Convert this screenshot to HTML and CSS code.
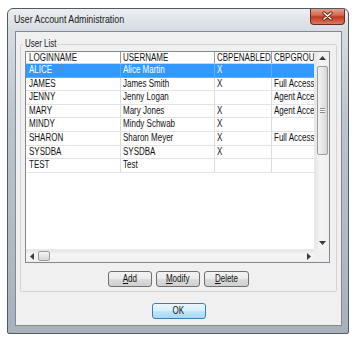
FILE: index.html
```html
<!DOCTYPE html>
<html>
<head>
<meta charset="utf-8">
<link rel="stylesheet" href="styles.css">
</head>
<body>
<div class="window">
  <div class="titlebar">
    <span class="title"><span class="t">User Account Administration</span></span>
    <div class="close">
      <svg width="11" height="10" viewBox="0 0 11 10">
        <path d="M2 2 L9 8 M9 2 L2 8" stroke="#5a1b12" stroke-width="3.2" stroke-linecap="round"/>
        <path d="M2 2 L9 8 M9 2 L2 8" stroke="#ffffff" stroke-width="1.6" stroke-linecap="round"/>
      </svg>
    </div>
  </div>
  <div class="frame-body">
    <div class="client">
      <fieldset class="group">
        <legend><span class="t">User List</span></legend>
        <div class="listview">
          <div class="lv-top">
            <div class="lv-table">
              <div class="hdr">
                <div class="c c1"><span class="t">LOGINNAME</span></div>
                <div class="c c2"><span class="t">USERNAME</span></div>
                <div class="c c3"><span class="t">CBPENABLED</span></div>
                <div class="c c4"><span class="t">CBPGROUP</span></div>
              </div>
              <div class="row sel">
                <div class="c c1"><span class="t">ALICE</span></div><div class="c c2"><span class="t">Alice Martin</span></div><div class="c c3"><span class="t">X</span></div><div class="c c4"></div>
              </div>
              <div class="row">
                <div class="c c1"><span class="t">JAMES</span></div><div class="c c2"><span class="t">James Smith</span></div><div class="c c3"><span class="t">X</span></div><div class="c c4"><span class="t">Full Access</span></div>
              </div>
              <div class="row">
                <div class="c c1"><span class="t">JENNY</span></div><div class="c c2"><span class="t">Jenny Logan</span></div><div class="c c3"></div><div class="c c4"><span class="t">Agent Access</span></div>
              </div>
              <div class="row">
                <div class="c c1"><span class="t">MARY</span></div><div class="c c2"><span class="t">Mary Jones</span></div><div class="c c3"><span class="t">X</span></div><div class="c c4"><span class="t">Agent Access</span></div>
              </div>
              <div class="row">
                <div class="c c1"><span class="t">MINDY</span></div><div class="c c2"><span class="t">Mindy Schwab</span></div><div class="c c3"><span class="t">X</span></div><div class="c c4"></div>
              </div>
              <div class="row">
                <div class="c c1"><span class="t">SHARON</span></div><div class="c c2"><span class="t">Sharon Meyer</span></div><div class="c c3"><span class="t">X</span></div><div class="c c4"><span class="t">Full Access</span></div>
              </div>
              <div class="row">
                <div class="c c1"><span class="t">SYSDBA</span></div><div class="c c2"><span class="t">SYSDBA</span></div><div class="c c3"><span class="t">X</span></div><div class="c c4"></div>
              </div>
              <div class="row">
                <div class="c c1"><span class="t">TEST</span></div><div class="c c2"><span class="t">Test</span></div><div class="c c3"></div><div class="c c4"></div>
              </div>
            </div>
            <div class="vscroll">
              <div class="sb-btn vb-up"><svg width="7" height="4" viewBox="0 0 7 4"><polygon points="3.5,0 7,4 0,4" fill="#3b3b3b"/></svg></div>
              <div class="v-track">
                <div class="v-thumb"><span class="grip"></span></div>
              </div>
              <div class="sb-btn vb-down"><svg width="7" height="4" viewBox="0 0 7 4"><polygon points="0,0 7,0 3.5,4" fill="#3b3b3b"/></svg></div>
            </div>
          </div>
          <div class="lv-bottom">
            <div class="hscroll">
              <div class="sb-btn hb-left"><svg width="4" height="7" viewBox="0 0 4 7"><polygon points="4,0 4,7 0,3.5" fill="#3b3b3b"/></svg></div>
              <div class="h-thumb"></div>
              <div class="h-track"></div>
              <div class="sb-btn hb-right"><svg width="4" height="7" viewBox="0 0 4 7"><polygon points="0,0 4,3.5 0,7" fill="#3b3b3b"/></svg></div>
            </div>
            <div class="corner"></div>
          </div>
        </div>
        <div class="buttons">
          <button class="btn b-add"><span class="t c-t"><u>A</u>dd</span></button>
          <button class="btn b-mod"><span class="t c-t"><u>M</u>odify</span></button>
          <button class="btn b-del"><span class="t c-t"><u>D</u>elete</span></button>
        </div>
      </fieldset>
      <div class="ok-row">
        <button class="btn ok"><span class="t c-t">OK</span></button>
      </div>
    </div>
  </div>
</div>
</body>
</html>
```
FILE: styles.css
```css
* { box-sizing: border-box; }
body {
  margin: 0;
  background: #ffffff;
  font-family: "Liberation Sans", Arial, sans-serif;
  font-size: 10px;
  color: #111;
}
.t {
  display: inline-block;
  white-space: nowrap;
  transform: scaleX(0.8);
  transform-origin: 0 50%;
}
.c-t {
  transform-origin: 50% 50%;
}
.window {
  margin: 8px 0 0 7px;
  width: 342px;
  height: 326px;
  border: 1px solid #515b66;
  border-radius: 6px 6px 2px 2px;
  background: linear-gradient(#eceff2, #d6dce2 22px, #bcc4cd 110px, #a9b2bc);
  display: flex;
  flex-direction: column;
  overflow: hidden;
}
.titlebar {
  height: 22px;
  flex: none;
  display: flex;
  align-items: flex-start;
  padding: 0 3px 0 6px;
}
.title {
  font-size: 11px;
  line-height: 12px;
  margin-top: 4px;
  color: #1a1a1a;
}
.close {
  margin-left: auto;
  margin-top: -1px;
  width: 35px;
  height: 17px;
  border: 1px solid #6b2a22;
  border-top: 0;
  border-radius: 0 0 4px 4px;
  background: linear-gradient(#e9a896, #d5694f 45%, #c03a20 55%, #d87a60);
  display: flex;
  align-items: center;
  justify-content: center;
}
.frame-body {
  flex: 1;
  display: flex;
  padding: 0 6px 7px 7px;
}
.client {
  flex: 1;
  background: #f0f0f0;
  border: 1px solid #7f8a96;
  padding: 6px 4px 0 4px;
  display: flex;
  flex-direction: column;
}
.group {
  margin: 0;
  min-width: 0;
  border: 1px solid #d3d3d3;
  border-radius: 2px;
  padding: 1px 6px 4px 4px;
}
.group legend {
  padding: 0 2px;
  margin-left: -2px;
  font-size: 10px;
  line-height: 12px;
  color: #1a1a1a;
  width: 34px;
  overflow: hidden;
}
.listview {
  width: 305px;
  height: 212px;
  border: 1px solid #828790;
  background: #fff;
  display: flex;
  flex-direction: column;
}
.lv-top {
  height: 197px;
  display: flex;
}
.lv-table {
  width: 288px;
  overflow: hidden;
}
.hdr, .row {
  display: flex;
  width: 306px;
}
.hdr {
  height: 12px;
  border-bottom: 1px solid #d5d5d5;
}
.row {
  height: 13.6px;
}
.c {
  flex: none;
  white-space: nowrap;
  overflow: hidden;
  padding-left: 2px;
  line-height: 12px;
}
.hdr .c {
  line-height: 11px;
  border-right: 1px solid #9a9a9a;
}
.row .c {
  border-right: 1px solid #dcdcdc;
  border-bottom: 1px solid #e3e3e3;
  line-height: 12.6px;
}
.c1 { width: 95px; padding-left: 3px; }
.c2 { width: 94px; }
.c3 { width: 57px; }
.c4 { width: 60px; }
.row.sel {
  background: #3399ff;
  color: #ffffff;
}
.row.sel .c {
  border-color: #5aaeff;
}
.vscroll {
  width: 15px;
  display: flex;
  flex-direction: column;
  background: linear-gradient(to right, #e6e6e6, #f5f5f5 40%, #efefef);
  border-left: 1px solid #e8e8e8;
}
.sb-btn {
  display: flex;
  align-items: center;
  justify-content: center;
  flex: none;
}
.vb-up { height: 11px; }
.vb-down { height: 12px; }
.v-track {
  flex: 1;
  padding-top: 3px;
}
.v-thumb {
  margin-left: 2px;
  width: 11px;
  height: 89px;
  border: 1px solid #9d9d9d;
  border-radius: 2px;
  background: linear-gradient(to right, #f3f3f3, #e6e6e6 50%, #d6d6d6);
  display: flex;
  align-items: center;
  justify-content: center;
}
.grip {
  width: 5px;
  height: 5px;
  border-top: 1px solid #888;
  border-bottom: 1px solid #888;
  background: linear-gradient(#fff 0 1px, #888 1px 2px, #fff 2px);
  background-size: 5px 3px;
  background-repeat: no-repeat;
}
.lv-bottom {
  height: 13px;
  display: flex;
}
.hscroll {
  flex: 1;
  display: flex;
  background: linear-gradient(#e6e6e6, #f5f5f5 40%, #efefef);
  border-top: 1px solid #e8e8e8;
}
.hb-left { width: 11px; }
.hb-right { width: 10px; }
.h-thumb {
  margin: 1px 0 0 1px;
  width: 12px;
  height: 10px;
  border: 1px solid #9d9d9d;
  border-radius: 2px;
  background: linear-gradient(#f3f3f3, #e6e6e6 50%, #d6d6d6);
}
.h-track { flex: 1; }
.corner {
  width: 15px;
  background: #f0f0f0;
}
.buttons {
  margin-top: 8px;
  padding-left: 2px;
  display: flex;
  justify-content: center;
  gap: 4px;
}
.btn {
  height: 16px;
  padding: 0;
  margin: 0;
  font-family: inherit;
  font-size: 10px;
  line-height: 14px;
  color: #111;
  border: 1px solid #707070;
  border-radius: 3px;
  background: linear-gradient(#f2f2f2, #ebebeb 50%, #dddddd 51%, #cfcfcf);
  overflow: hidden;
}
.b-add, .b-mod { width: 44px; }
.b-del { width: 45px; }
.ok-row {
  margin-top: 11px;
  display: flex;
  justify-content: center;
}
.ok {
  width: 54px;
  border-color: #3c7fb1;
  background: linear-gradient(#eaf6fd, #d9f0fc 50%, #bee6fd 51%, #a7d9f5);
}
```
